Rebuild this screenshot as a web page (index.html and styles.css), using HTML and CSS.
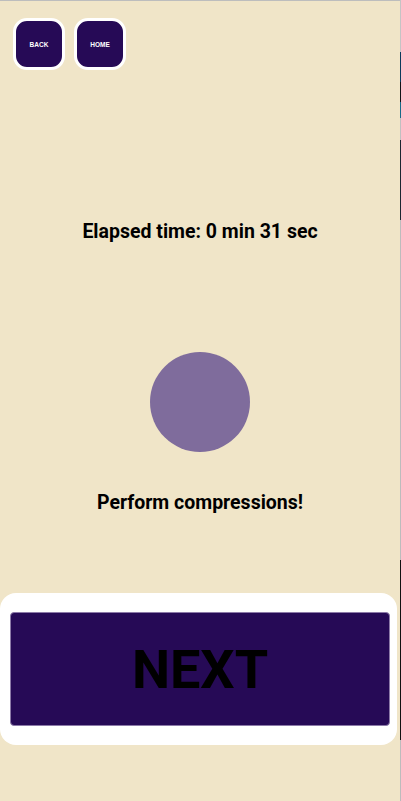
FILE: index.html
```html
<!DOCTYPE html>
<html>
<head>
<meta charset="utf-8">
<link rel="stylesheet" href="styles.css">
</head>
<body>
<div class="frame">
  <div class="app">
    <nav class="nav">
      <button class="nav-btn">BACK</button>
      <button class="nav-btn">HOME</button>
    </nav>
    <h2 class="elapsed">Elapsed time: 0 min 31 sec</h2>
    <div class="pulse"></div>
    <p class="prompt">Perform compressions!</p>
    <div class="panel">
      <button class="next">NEXT</button>
    </div>
  </div>
  <div class="edge"></div>
</div>
</body>
</html>
```
FILE: styles.css
```css
html, body {
  margin: 0;
  padding: 0;
}
body {
  width: 401px;
  height: 801px;
  overflow: hidden;
  font-family: Roboto, "Liberation Sans", sans-serif;
}
.frame {
  display: flex;
  height: 801px;
}
.app {
  width: 400px;
  height: 800px;
  background: #f0e5c8;
  border-top: 1px solid #bdbdbd;
  display: flex;
  flex-direction: column;
}
.edge {
  width: 1px;
  height: 801px;
  background: linear-gradient(to bottom,
    #c4c4c4 0, #c4c4c4 52px,
    #0b3a5b 52px, #0b3a5b 82px,
    #121418 82px, #121418 102px,
    #186a88 102px, #186a88 118px,
    #c0c0c0 118px, #c0c0c0 140px,
    #1c2631 140px, #1c2631 220px,
    #bcbcbc 220px, #bcbcbc 560px,
    #111111 560px, #111111 740px,
    #bcbcbc 740px);
}
.nav {
  display: flex;
  gap: 9px;
  padding: 17px 0 0 13px;
}
.nav-btn {
  width: 52px;
  height: 52px;
  box-sizing: border-box;
  border: 3px solid #ffffff;
  border-radius: 14px;
  background: #260a56;
  color: #ffffff;
  font-family: "Liberation Sans", Arial, sans-serif;
  font-weight: bold;
  font-size: 6.5px;
  padding: 0;
  margin: 0;
}
.elapsed {
  margin: 150px 0 0;
  text-align: center;
  font-size: 19.5px;
  line-height: 24px;
  font-weight: bold;
  color: #000;
}
.pulse {
  width: 100px;
  height: 100px;
  border-radius: 50%;
  background: #7f6c9c;
  margin: 108px auto 0;
}
.prompt {
  margin: 39px 0 0;
  text-align: center;
  font-size: 19.5px;
  line-height: 24px;
  font-weight: bold;
  color: #000;
}
.panel {
  margin-top: 78px;
  width: 397px;
  box-sizing: border-box;
  background: #ffffff;
  border-radius: 16px;
  padding: 19px 7px 19px 10px;
}
.next {
  display: block;
  width: 100%;
  height: 114px;
  background: #260a56;
  border: 1px solid #8c7aa8;
  border-radius: 4px;
  color: #000;
  font-family: Roboto, "Liberation Sans", sans-serif;
  font-weight: bold;
  font-size: 54px;
  padding: 0;
  margin: 0;
}
```
